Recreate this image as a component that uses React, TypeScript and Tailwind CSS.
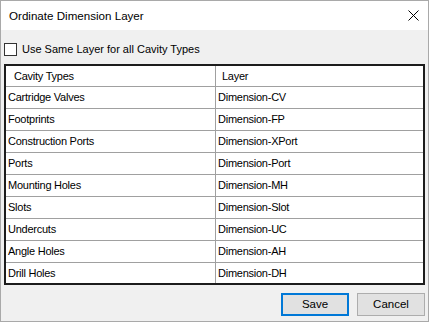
import React from "react";

const rows: [string, string][] = [
  ["Cartridge Valves", "Dimension-CV"],
  ["Footprints", "Dimension-FP"],
  ["Construction Ports", "Dimension-XPort"],
  ["Ports", "Dimension-Port"],
  ["Mounting Holes", "Dimension-MH"],
  ["Slots", "Dimension-Slot"],
  ["Undercuts", "Dimension-UC"],
  ["Angle Holes", "Dimension-AH"],
  ["Drill Holes", "Dimension-DH"],
];

export default function App() {
  return (
    <div
      className="w-[429px] h-[322px] bg-[#f0f0f0] border border-[#a9a9a9] flex flex-col text-black"
      style={{ fontFamily: '"Liberation Sans", Arial, sans-serif' }}
    >
      <div className="h-[29px] bg-white flex items-center justify-between pl-[8px] pr-[8px] shrink-0">
        <span className="text-[11.6px] leading-none">Ordinate Dimension Layer</span>
        <svg width="11" height="11" viewBox="0 0 11 11" className="mr-[1px]">
          <path d="M0.5 0.5 L10.5 10.5 M10.5 0.5 L0.5 10.5" stroke="#000" strokeWidth="1" fill="none" />
        </svg>
      </div>
      <div className="flex items-center pl-[3px] mt-[13px] h-[13px]">
        <div className="w-[13px] h-[13px] border border-[#333333] bg-white shrink-0" />
        <span className="ml-[5px] text-[11px] leading-none">Use Same Layer for all Cavity Types</span>
      </div>
      <div className="ml-[3px] mt-[8px] w-[421px] border-2 border-[#1c1c1c] bg-white flex flex-col text-[11px] tracking-[-0.25px]">
        <div className="flex h-[21px] border-b border-[#a0a0a0]">
          <div className="w-[210px] border-r border-[#a0a0a0] flex items-center pl-[8px]">Cavity Types</div>
          <div className="flex-1 flex items-center pl-[6px]">Layer</div>
        </div>
        {rows.map(([a, b], i) => (
          <div
            key={a}
            className={
              i === rows.length - 1
                ? "flex h-[20px]"
                : "flex h-[22px] border-b border-[#a0a0a0]"
            }
          >
            <div className="w-[210px] border-r border-[#a0a0a0] flex items-center pl-[2px]">{a}</div>
            <div className="flex-1 flex items-center pl-[2px]">{b}</div>
          </div>
        ))}
      </div>
      <div className="flex justify-end gap-[8px] pr-[3px] mt-[8px]">
        <button className="w-[68px] h-[23px] bg-[#e1e1e1] border-2 border-[#0078d7] text-[11.5px] flex items-center justify-center">
          Save
        </button>
        <button className="w-[68px] h-[23px] bg-[#e1e1e1] border border-[#adadad] text-[11.5px] flex items-center justify-center">
          Cancel
        </button>
      </div>
    </div>
  );
}
